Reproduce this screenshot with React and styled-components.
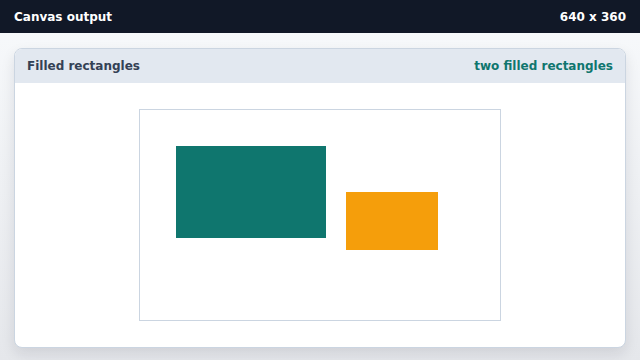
import styled, { createGlobalStyle } from "styled-components";

const GlobalStyle = createGlobalStyle`
  html, body {
    margin: 0;
    padding: 0;
    width: 640px;
    height: 360px;
    overflow: hidden;
    font-family: "DejaVu Sans", sans-serif;
  }
`;

const rects = [
  { x: 36, y: 36, w: 150, h: 92, color: "#0f766e" },
  { x: 206, y: 82, w: 92, h: 58, color: "#f59e0b" },
];

const App = () => {
  return (
    <>
      <GlobalStyle />
      <Page>
        <TopBar>
          <span>Canvas output</span>
          <span>640 x 360</span>
        </TopBar>
        <Main>
          <Card>
            <CardHeader>
              <CardTitle>Filled rectangles</CardTitle>
              <CardNote>two filled rectangles</CardNote>
            </CardHeader>
            <CardBody>
              <CanvasFrame>
                <svg width="360" height="210" viewBox="0 0 360 210">
                  {rects.map((r, i) => (
                    <rect key={i} x={r.x} y={r.y} width={r.w} height={r.h} fill={r.color} />
                  ))}
                </svg>
              </CanvasFrame>
            </CardBody>
          </Card>
        </Main>
      </Page>
    </>
  );
};

export default App;

const Page = styled.div`
  width: 640px;
  height: 360px;
  display: flex;
  flex-direction: column;
  background: linear-gradient(180deg, #f8fafc 0%, #e5e7eb 100%);
`;

const TopBar = styled.div`
  height: 33px;
  flex-shrink: 0;
  background-color: #111827;
  color: #ffffff;
  display: flex;
  align-items: center;
  justify-content: space-between;
  padding: 0 14px;
  font-size: 12px;
  font-weight: bold;
`;

const Main = styled.div`
  padding: 15px 14px 0 14px;
`;

const Card = styled.div`
  background-color: #ffffff;
  border: 1px solid #cbd5e1;
  border-radius: 8px;
  overflow: hidden;
  box-shadow: 0 6px 14px rgba(15, 23, 42, 0.1);
`;

const CardHeader = styled.div`
  height: 34px;
  background-color: #e2e8f0;
  display: flex;
  align-items: center;
  justify-content: space-between;
  padding: 0 12px;
  font-size: 12px;
  font-weight: bold;
`;

const CardTitle = styled.span`
  color: #334155;
`;

const CardNote = styled.span`
  color: #0f766e;
`;

const CardBody = styled.div`
  display: flex;
  justify-content: center;
  padding: 26px 0 26px 0;
`;

const CanvasFrame = styled.div`
  border: 1px solid #cbd5e1;
  line-height: 0;
  svg {
    display: block;
  }
`;
